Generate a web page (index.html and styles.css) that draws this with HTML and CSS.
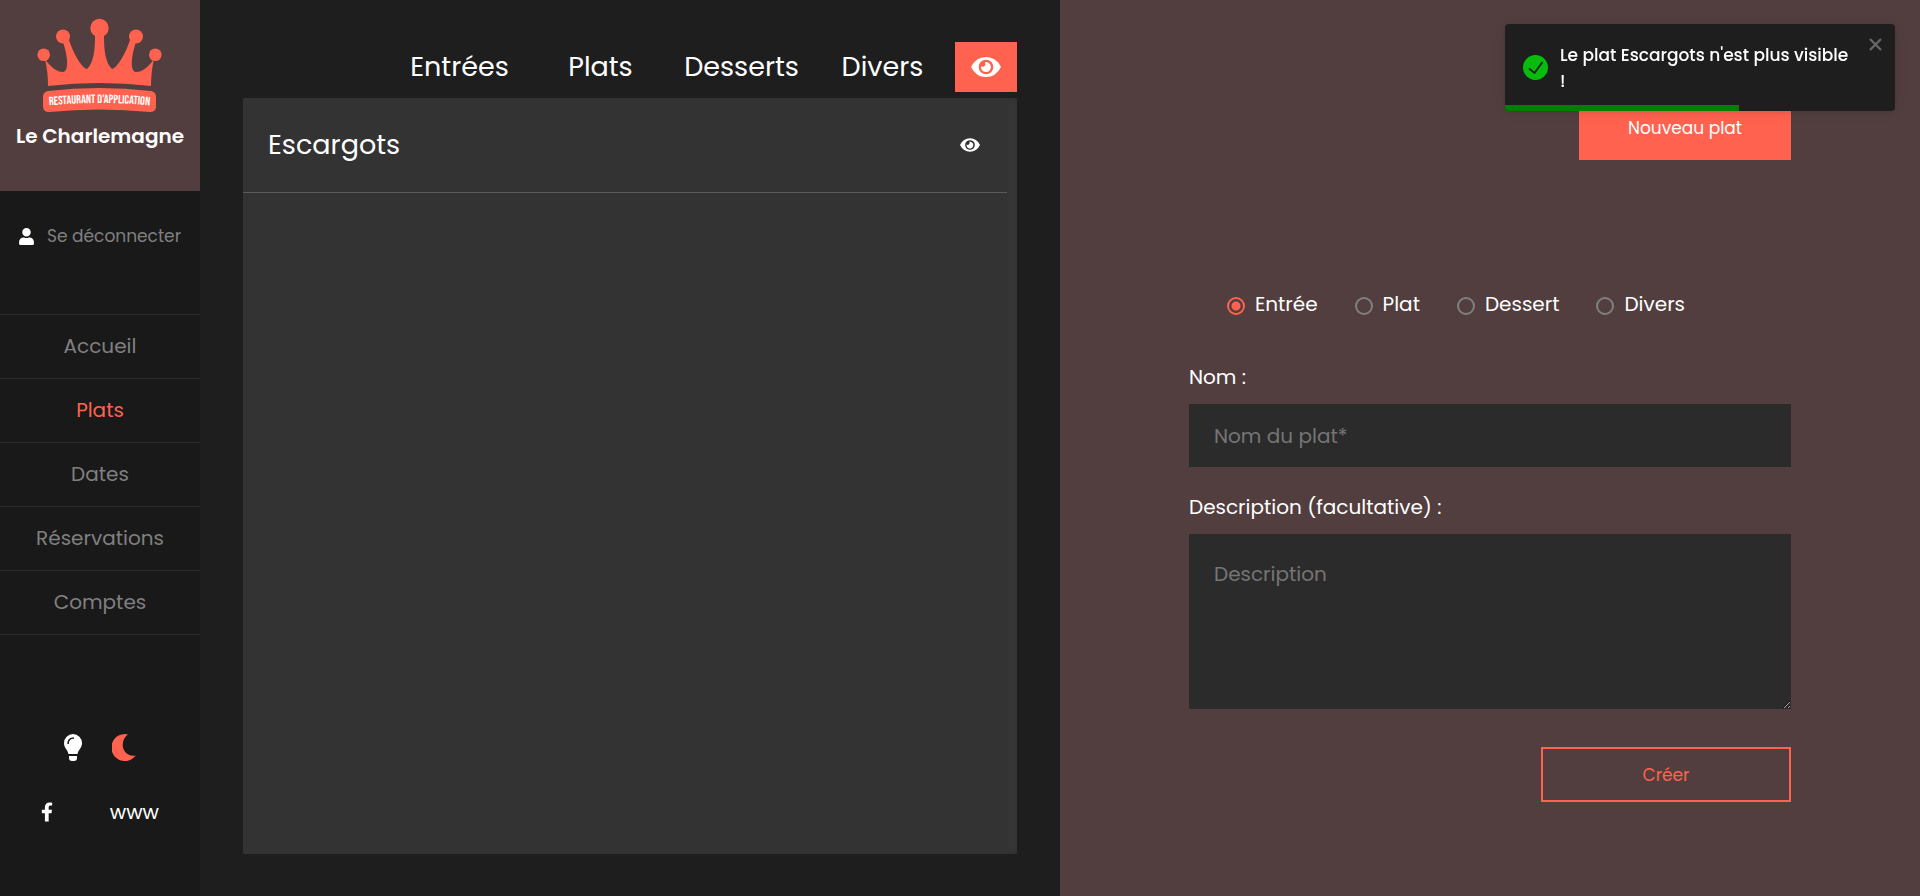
FILE: index.html
```html
<!DOCTYPE html>
<html lang="fr">
<head>
<meta charset="utf-8">
<meta name="viewport" content="width=device-width, initial-scale=1">
<title>Le Charlemagne – Plats</title>
<link rel="stylesheet" href="styles.css">
</head>
<body>
<div class="app">
  <aside class="sidebar">
    <a class="brand" href="#">
      <svg class="brand-logo" viewBox="0 0 126 96" role="img" aria-label="Restaurant d'application">
        <g fill="#ff624f">
          <circle cx="62.500" cy="10" r="9.200"/>
          <circle cx="26" cy="18.500" r="7"/>
          <circle cx="99" cy="18.500" r="7"/>
          <circle cx="6.700" cy="36.700" r="6.300"/>
          <circle cx="118.300" cy="36.700" r="6.300"/>
          <path d="M8 41 C15 51 21 54 26 54 C33 53 30 36 26 24 L32 22 C37 37 45 50 50 51 C57 45 58 30 58 18 L67 18 C67 30 68 45 75 51 C80 50 88 37 93 22 L99 24 C95 36 92 53 99 54 C104 54 110 51 117 41 C115 50 114 58 114 68 Q62 62 11 68 C11 58 10 50 8 41Z"/>
          <path d="M11 73 Q62 67 114 73 Q119 74 119 79 V88 Q119 94 113 94 Q62 89 12 94 Q6 94 6 88 V79 Q6 74 11 73Z"/>
        </g>
        <path id="ribbon" d="M6 88 Q62 82 119 88" fill="none"/>
        <text class="ribbon-text" text-anchor="middle"><textPath href="#ribbon" startOffset="50%">RESTAURANT D'APPLICATION</textPath></text>
      </svg>
      <span class="brand-name">Le Charlemagne</span>
    </a>
    <button class="logout" type="button">
      <svg class="icon-user" viewBox="0 0 448 512"><path fill="currentColor" d="M224 256c70.700 0 128-57.300 128-128S294.700 0 224 0 96 57.300 96 128s57.300 128 128 128zm89.600 32h-16.700c-22.200 10.200-46.900 16-72.900 16s-50.600-5.800-72.900-16h-16.700C60.200 288 0 348.200 0 422.400V464c0 26.500 21.500 48 48 48h352c26.500 0 48-21.500 48-48v-41.600c0-74.200-60.200-134.400-134.400-134.400z"/></svg>
      <span>Se déconnecter</span>
    </button>
    <nav class="menu">
      <a class="menu-link" href="#">Accueil</a>
      <a class="menu-link menu-link-active" href="#" aria-current="page">Plats</a>
      <a class="menu-link" href="#">Dates</a>
      <a class="menu-link" href="#">Réservations</a>
      <a class="menu-link" href="#">Comptes</a>
    </nav>
    <div class="themes">
      <button class="theme" type="button" aria-label="Thème clair">
        <svg class="icon-bulb" viewBox="0 0 18 27"><path fill="currentColor" d="M9 0a9 9 0 0 1 9 9c0 5-3.500 6.500-4.500 11h-9C3.500 15.500 0 14 0 9a9 9 0 0 1 9-9zM5 22h8v2q0 3-3 3H8q-3 0-3-3z"/><path d="M4 10Q4 4 10 4" fill="none" stroke="#191919" stroke-width="1.500"/></svg>
      </button>
      <button class="theme theme-active" type="button" aria-label="Thème sombre">
        <svg class="icon-moon" viewBox="0 0 24 27"><path fill="currentColor" d="M16 .4A13.500 13.500 0 1 0 23.800 21.500C16 23 10.500 17.500 10.700 10.500C10.800 6 13 2.300 16 .4Z"/></svg>
      </button>
    </div>
    <div class="socials">
      <a class="social" href="#" aria-label="Facebook">
        <svg class="icon-facebook" viewBox="0 0 320 512"><path fill="currentColor" d="M279.140 288l14.220-92.660h-88.910v-60.130c0-25.350 12.420-50.060 52.240-50.060h40.420V6.260S260.430 0 225.360 0c-73.220 0-121.080 44.380-121.080 124.720v70.620H22.890V288h81.390v224h100.170V288z"/></svg>
      </a>
      <a class="social" href="#">www</a>
    </div>
  </aside>

  <main class="dishes">
    <div class="tabs">
      <button class="tab" type="button">Entrées</button>
      <button class="tab" type="button">Plats</button>
      <button class="tab" type="button">Desserts</button>
      <button class="tab" type="button">Divers</button>
      <button class="tab-eye" type="button" aria-label="Plats visibles">
        <svg class="icon-eye-large" viewBox="0 0 30 20"><path fill="currentColor" fill-rule="evenodd" d="M0 10Q5 0 15 0T30 10Q25 20 15 20T0 10ZM15 2.700a7.300 7.300 0 1 0 0 14.600a7.300 7.300 0 1 0 0-14.600ZM14 5.200a5 5 0 1 1-4 4q2.500 1.500 4-.6q.8-1.800 0-3.400Z"/></svg>
      </button>
    </div>
    <section class="panel">
      <ul class="dish-list">
        <li class="dish">
          <span>Escargots</span>
          <button class="dish-eye" type="button" aria-label="Changer la visibilité">
            <svg class="icon-eye" viewBox="0 0 30 20"><path fill="currentColor" fill-rule="evenodd" d="M0 10Q5 0 15 0T30 10Q25 20 15 20T0 10ZM15 2.700a7.300 7.300 0 1 0 0 14.600a7.300 7.300 0 1 0 0-14.600ZM14 5.200a5 5 0 1 1-4 4q2.500 1.500 4-.6q.8-1.800 0-3.400Z"/></svg>
          </button>
        </li>
      </ul>
      <div class="track"></div>
    </section>
  </main>

  <section class="editor">
    <button class="button-new" type="button">Nouveau plat</button>
    <form class="form">
      <div class="kinds">
        <label class="kind"><input class="radio" type="radio" name="kind" checked>Entrée</label>
        <label class="kind"><input class="radio" type="radio" name="kind">Plat</label>
        <label class="kind"><input class="radio" type="radio" name="kind">Dessert</label>
        <label class="kind"><input class="radio" type="radio" name="kind">Divers</label>
      </div>
      <label class="label" for="name">Nom :</label>
      <input class="field" id="name" type="text" placeholder="Nom du plat*">
      <label class="label" for="description">Description (facultative) :</label>
      <textarea class="field field-area" id="description" placeholder="Description"></textarea>
      <button class="button-create" type="button">Créer</button>
    </form>
  </section>
</div>

<div class="toast" role="status">
  <svg class="toast-icon" viewBox="0 0 25 25"><circle cx="12.500" cy="12.500" r="12.500" fill="#07bc0c"/><path d="M6 13.500L11.500 18L19.500 7" fill="none" stroke="#1e1e1e" stroke-width="1.800"/></svg>
  <p class="toast-text">Le plat Escargots n'est plus visible !</p>
  <button class="toast-close" type="button" aria-label="Fermer">
    <svg class="icon-close" viewBox="0 0 13 13"><path d="M1 1L12 12M12 1L1 12" fill="none" stroke="currentColor" stroke-width="2.400"/></svg>
  </button>
  <div class="toast-progress"></div>
</div>
</body>
</html>
```
FILE: styles.css
```css
* {
  box-sizing: border-box;
}

body {
  margin: 0;
  background: #1e1e1e;
  color: #fff;
  font-family: Poppins, Inter, "Open Sans", sans-serif;
  font-size: 20px;
  line-height: 30px;
}

button,
input,
textarea {
  margin: 0;
  font: inherit;
  color: inherit;
}

button {
  padding: 0;
  border: 0;
  background: none;
  cursor: pointer;
}

a {
  color: inherit;
  text-decoration: none;
}

svg {
  display: block;
}

.app {
  display: grid;
  grid-template-columns: 200px 1fr 1fr;
  min-height: 100vh;
}

/* Sidebar */
.sidebar {
  display: flex;
  flex-direction: column;
  background: #191919;
}

.brand {
  display: flex;
  flex-direction: column;
  align-items: center;
  gap: 7px;
  height: 191px;
  padding-top: 18px;
  background: #523e3e;
}

.brand-logo {
  width: 126px;
  height: 96px;
}

.ribbon-text {
  fill: #fff;
  font-family: "Bebas Neue", "Roboto Condensed", "Liberation Sans Narrow", Roboto, sans-serif;
  font-size: 12px;
}

.brand-name {
  font-size: 20px;
  font-weight: 600;
}

.logout {
  display: flex;
  align-items: center;
  justify-content: center;
  gap: 13px;
  height: 90px;
  color: #808080;
  font-size: 17px;
}

.icon-user {
  width: 15px;
  height: 17px;
  color: #fff;
}

.menu {
  margin-top: 33px;
  border-top: 1px solid #2a2a2a;
}

.menu-link {
  display: block;
  padding: 16px 0 17px;
  border-bottom: 1px solid #2a2a2a;
  color: #808080;
  text-align: center;
}

.menu-link-active {
  color: #ff624f;
}

.themes {
  display: flex;
  justify-content: center;
  gap: 30px;
  margin-top: 99px;
}

.theme-active {
  color: #ff624f;
}

.icon-bulb {
  width: 18px;
  height: 27px;
}

.icon-moon {
  width: 24px;
  height: 27px;
}

.socials {
  display: flex;
  align-items: center;
  justify-content: space-between;
  margin-top: 36px;
  padding: 0 41px;
}

.icon-facebook {
  width: 12px;
  height: 20px;
}

/* Dish list */
.dishes {
  display: flex;
  flex-direction: column;
  gap: 6px;
  padding: 42px 43px;
}

.tabs {
  display: grid;
  grid-template-columns: repeat(4, 141px) 64px;
  justify-content: end;
  height: 50px;
  font-size: 27px;
}

.tab-eye {
  display: grid;
  place-items: center;
  margin-left: 2px;
  background: #ff624f;
}

.icon-eye-large {
  width: 30px;
  height: 20px;
}

.panel {
  display: flex;
  flex: 1;
  background: #333;
}

.dish-list {
  flex: 1;
  margin: 0;
  padding: 0;
  list-style: none;
}

.dish {
  display: flex;
  align-items: center;
  justify-content: space-between;
  height: 95px;
  padding: 0 27px 0 25px;
  border-bottom: 1px solid #5a5a5a;
  font-size: 27px;
}

.icon-eye {
  width: 20px;
  height: 14px;
}

.track {
  width: 10px;
  background: #383838;
  box-shadow: inset 0 0 6px rgba(0, 0, 0, 0.2);
}

/* Editor */
.editor {
  display: flex;
  flex-direction: column;
  padding: 96px 15% 42px;
  background: #523e3e;
}

.button-new {
  align-self: flex-end;
  width: 212px;
  height: 64px;
  background: #ff624f;
  font-size: 17px;
}

.form {
  display: flex;
  flex-direction: column;
  margin-top: 129px;
}

.kinds {
  display: flex;
  gap: 37px;
  margin-bottom: 43px;
  padding-left: 38px;
}

.kind {
  display: flex;
  align-items: center;
  gap: 10px;
}

.radio {
  width: 18px;
  height: 18px;
  margin-top: 4px;
  border: 2px solid #808080;
  border-radius: 50%;
  appearance: none;
}

.radio:checked {
  border-color: #ff624f;
  background: radial-gradient(circle, #ff624f 0 4px, transparent 5px);
}

.label {
  margin-bottom: 12px;
}

.field {
  width: 100%;
  height: 63px;
  margin-bottom: 25px;
  padding: 0 25px;
  border: 0;
  border-radius: 0;
  background: #2b2b2b;
}

.field::placeholder {
  color: #757575;
}

.field-area {
  height: 175px;
  margin-bottom: 38px;
  padding: 25px;
}

.button-create {
  align-self: flex-end;
  width: 250px;
  height: 55px;
  border: 2px solid #ff624f;
  color: #ff624f;
  font-size: 17px;
}

/* Notification */
.toast {
  position: fixed;
  top: 24px;
  right: 25px;
  display: flex;
  align-items: center;
  width: 390px;
  min-height: 87px;
  padding: 17px 13px 17px 18px;
  overflow: hidden;
  border-radius: 4px;
  background: #1e1e1e;
  box-shadow: 0 1px 10px rgba(0, 0, 0, 0.1), 0 2px 15px rgba(0, 0, 0, 0.05);
  font-size: 17px;
  font-weight: 500;
  line-height: 26px;
}

.toast-icon {
  flex: none;
  width: 25px;
  height: 25px;
  margin-right: 12px;
}

.toast-text {
  flex: 1;
  margin: 0;
}

.toast-close {
  align-self: flex-start;
  margin: -3px 0 0 12px;
  color: #666;
}

.icon-close {
  width: 13px;
  height: 13px;
}

.toast-progress {
  position: absolute;
  bottom: 0;
  left: 0;
  width: 60%;
  height: 6px;
  background: #008000;
}
```
